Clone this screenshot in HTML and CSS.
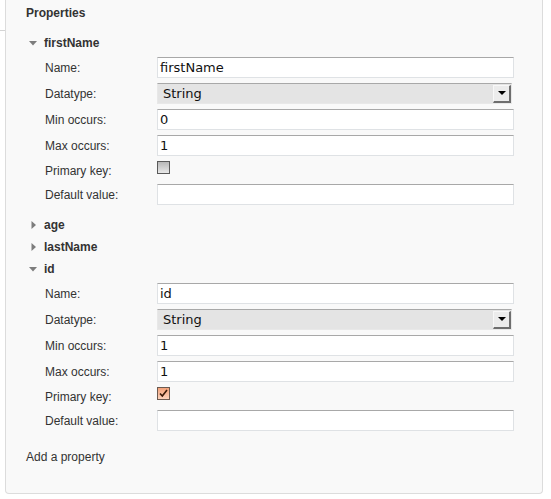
FILE: index.html
```html
<!DOCTYPE html>
<html>
<head>
<meta charset="utf-8">
<link rel="stylesheet" href="styles.css">
</head>
<body>
<div class="page">
  <div class="gutter"></div>
  <div class="panel">
    <div class="title">Properties</div>

    <div class="group">
      <div class="ghead"><svg class="tri" width="8" height="8" viewBox="0 0 8 8"><polygon points="0,2 8,2 4,6.5" fill="#7d7d7d"/></svg><span>firstName</span></div>
      <div class="fields">
        <div class="row"><span class="lbl">Name:</span><div class="inp">firstName</div></div>
        <div class="row"><span class="lbl">Datatype:</span><div class="sel"><span>String</span><span class="btn"><span class="arr"></span></span></div></div>
        <div class="row"><span class="lbl">Min occurs:</span><div class="inp">0</div></div>
        <div class="row"><span class="lbl">Max occurs:</span><div class="inp">1</div></div>
        <div class="row crow"><span class="lbl">Primary key:</span><span class="cb"></span></div>
        <div class="row"><span class="lbl">Default value:</span><div class="inp"></div></div>
      </div>
    </div>

    <div class="group">
      <div class="ghead"><svg class="tri" width="8" height="8" viewBox="0 0 8 8"><polygon points="2.5,0 7,4 2.5,8" fill="#7d7d7d"/></svg><span>age</span></div>
    </div>
    <div class="group">
      <div class="ghead"><svg class="tri" width="8" height="8" viewBox="0 0 8 8"><polygon points="2.5,0 7,4 2.5,8" fill="#7d7d7d"/></svg><span>lastName</span></div>
    </div>

    <div class="group">
      <div class="ghead"><svg class="tri" width="8" height="8" viewBox="0 0 8 8"><polygon points="0,2 8,2 4,6.5" fill="#7d7d7d"/></svg><span>id</span></div>
      <div class="fields">
        <div class="row"><span class="lbl">Name:</span><div class="inp">id</div></div>
        <div class="row"><span class="lbl">Datatype:</span><div class="sel"><span>String</span><span class="btn"><span class="arr"></span></span></div></div>
        <div class="row"><span class="lbl">Min occurs:</span><div class="inp">1</div></div>
        <div class="row"><span class="lbl">Max occurs:</span><div class="inp">1</div></div>
        <div class="row crow"><span class="lbl">Primary key:</span><span class="cb on"><svg width="11" height="11" viewBox="0 0 11 11"><path d="M2 5.5 L4.3 8 L9 2" fill="none" stroke="#3a1a08" stroke-width="1.6"/></svg></span></div>
        <div class="row"><span class="lbl">Default value:</span><div class="inp"></div></div>
      </div>
    </div>

    <div class="add">Add a property</div>
  </div>
</div>
</body>
</html>
```

FILE: styles.css
```css
html, body {
  margin: 0;
  padding: 0;
  background: #fff;
}
body {
  font-family: "Liberation Sans", Arial, sans-serif;
  font-size: 12px;
  color: #333;
}
.page {
  display: flex;
  align-items: flex-start;
}
.gutter {
  width: 5px;
  height: 30px;
  border-bottom: 1px solid #d4d4d4;
  flex: none;
}
.panel {
  width: 538px;
  height: 494px;
  box-sizing: border-box;
  background: #f9f9f9;
  border: 1px solid #dcdcdc;
  border-top: none;
  border-radius: 0 0 4px 4px;
  padding: 5px 0 0 20px;
}
.title {
  font-weight: bold;
  line-height: 16px;
  height: 16px;
  margin-bottom: 11px;
}
.ghead {
  height: 22px;
  display: flex;
  align-items: center;
  font-weight: bold;
  padding-left: 3px;
}
.tri {
  display: block;
  flex: none;
  margin-right: 7px;
}
.fields {
  padding: 3px 0 4px 19px;
}
.row {
  display: flex;
  align-items: center;
  height: 21px;
  margin-bottom: 5px;
}
.row.crow {
  height: 18px;
  align-items: flex-start;
}
.row.crow .lbl {
  line-height: 18px;
  margin-top: 1px;
}
.lbl {
  width: 112px;
  flex: none;
}
.inp {
  width: 357px;
  height: 21px;
  box-sizing: border-box;
  background: #fff;
  border: 1px solid #dfe2e5;
  border-top-color: #a8a8a8;
  font-family: "DejaVu Sans", sans-serif;
  font-size: 13px;
  color: #111;
  line-height: 19px;
  padding-left: 2px;
}
.sel {
  width: 355px;
  height: 21px;
  box-sizing: border-box;
  background: #e4e4e4;
  border: 1px solid #e8e8e8;
  border-top-color: #a8a8a8;
  font-family: "DejaVu Sans", sans-serif;
  font-size: 13px;
  color: #111;
  display: flex;
  align-items: center;
  justify-content: space-between;
  padding-left: 5px;
}
.btn {
  width: 18px;
  height: 18px;
  box-sizing: border-box;
  background: #ececec;
  border: 1px solid #f8f8f8;
  border-right: 2px solid #6e6e6e;
  border-bottom: 2px solid #6e6e6e;
  display: flex;
  align-items: center;
  justify-content: center;
}
.arr {
  width: 0;
  height: 0;
  border-left: 4px solid transparent;
  border-right: 4px solid transparent;
  border-top: 4px solid #000;
}
.cb {
  width: 13px;
  height: 13px;
  box-sizing: border-box;
  border: 1px solid #5a5a5a;
  background: linear-gradient(#b8b8b8, #e8e8e8);
  display: flex;
  align-items: center;
  justify-content: center;
}
.cb.on {
  background: linear-gradient(#f4a27a, #fbd3bd);
  border-color: #6b5a50;
}
.cb svg {
  display: block;
}
.add {
  margin-top: 9px;
  line-height: 16px;
}
```
